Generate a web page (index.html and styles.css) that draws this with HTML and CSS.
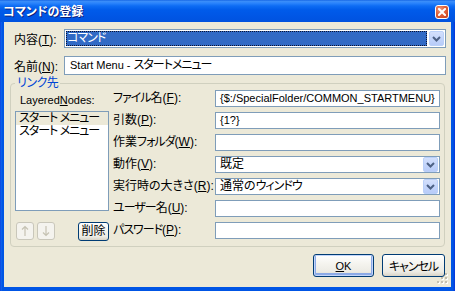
FILE: index.html
```html
<!DOCTYPE html>
<html lang="ja">
<head>
<meta charset="utf-8">
<title>コマンドの登録</title>
<link rel="stylesheet" href="styles.css">
</head>
<body>
<div class="window">
  <div class="titlebar">
    <span class="title">コマンドの登録</span>
    <span class="close"><svg width="8" height="8" viewBox="0 0 8 8"><path d="M1 1L7 7M7 1L1 7" stroke="#fff" stroke-width="2" stroke-linecap="square"/></svg></span>
  </div>
  <div class="body">
    <div class="row">
      <span class="lbl">内容(<u>T</u>):</span>
      <div class="combo combo-main">
        <div class="combo-val focus kana">コマンド</div>
        <span class="drop"><svg width="9" height="6" viewBox="0 0 9 6"><path d="M1 1L4.5 4.5L8 1" fill="none" stroke="#4D6185" stroke-width="2"/></svg></span>
      </div>
    </div>
    <div class="row row2">
      <span class="lbl">名前(<u>N</u>):</span>
      <div class="field field-main"><span class="lat">Start Menu - </span><span class="kana">スタートメニュー</span></div>
    </div>
    <fieldset class="group">
      <legend>リンク先</legend>
      <div class="grid">
        <div class="left">
          <div class="nodes-lbl lat">Layered<u>N</u>odes:</div>
          <div class="listbox">
            <div class="item selected kana">スタート メニュー</div>
            <div class="item kana">スタート メニュー</div>
          </div>
          <div class="lb-buttons">
            <span class="sbtn disabled"><svg width="16" height="16" viewBox="0 0 16 16"><path d="M8 3.5V13M5 6.5L8 3.5L11 6.5" fill="none" stroke="#C5C2B2" stroke-width="1.2"/></svg></span>
            <span class="sbtn disabled"><svg width="16" height="16" viewBox="0 0 16 16"><path d="M8 3V12.5M5 9.5L8 12.5L11 9.5" fill="none" stroke="#C5C2B2" stroke-width="1.2"/></svg></span>
            <span class="xbtn del">削除</span>
          </div>
        </div>
        <span class="flbl"><span class="kana">ファイル</span>名(<u>F</u>):</span>
        <div class="field lat">{$:/SpecialFolder/COMMON_STARTMENU}</div>
        <span class="flbl">引数(<u>P</u>):</span>
        <div class="field lat">{1?}</div>
        <span class="flbl">作業<span class="kana">フォルダ</span>(<u>W</u>):</span>
        <div class="field"></div>
        <span class="flbl">動作(<u>V</u>):</span>
        <div class="combo">
          <div class="combo-val">既定</div>
          <span class="drop"><svg width="9" height="6" viewBox="0 0 9 6"><path d="M1 1L4.5 4.5L8 1" fill="none" stroke="#4D6185" stroke-width="2"/></svg></span>
        </div>
        <span class="flbl">実行時の大きさ(<u>R</u>):</span>
        <div class="combo">
          <div class="combo-val">通常の<span class="kana">ウィンドウ</span></div>
          <span class="drop"><svg width="9" height="6" viewBox="0 0 9 6"><path d="M1 1L4.5 4.5L8 1" fill="none" stroke="#4D6185" stroke-width="2"/></svg></span>
        </div>
        <span class="flbl"><span class="kana">ユーザー</span>名(<u>U</u>):</span>
        <div class="field"></div>
        <span class="flbl"><span class="kana">パスワード</span>(<u>P</u>):</span>
        <div class="field"></div>
      </div>
    </fieldset>
    <div class="footer">
      <span class="xbtn ok default lat"><u>O</u>K</span>
      <span class="xbtn cancel kana">キャンセル</span>
    </div>
    <svg class="grip" width="12" height="12" viewBox="0 0 12 12">
      <g fill="#fff"><rect x="9" y="1" width="2" height="2"/><rect x="5" y="5" width="2" height="2"/><rect x="9" y="5" width="2" height="2"/><rect x="1" y="9" width="2" height="2"/><rect x="5" y="9" width="2" height="2"/><rect x="9" y="9" width="2" height="2"/></g>
      <g fill="#C2BFB0"><rect x="8" y="0" width="2" height="2"/><rect x="4" y="4" width="2" height="2"/><rect x="8" y="4" width="2" height="2"/><rect x="0" y="8" width="2" height="2"/><rect x="4" y="8" width="2" height="2"/><rect x="8" y="8" width="2" height="2"/></g>
    </svg>
  </div>
</div>
</body>
</html>
```

FILE: styles.css
```css
html, body {
  margin: 0;
  padding: 0;
}

body {
  width: 455px;
  height: 291px;
  overflow: hidden;
  font-family: "Liberation Sans", "Noto Sans CJK JP", sans-serif;
  font-size: 12px;
  font-feature-settings: "palt";
  color: #000;
  background: #0055E5;
}

u {
  text-decoration: underline;
  text-underline-offset: 1px;
}

.lat {
  font-size: 11px;
  letter-spacing: 0;
}

.kana {
  letter-spacing: -1px;
}

.window {
  width: 455px;
  height: 291px;
  box-sizing: border-box;
  display: flex;
  flex-direction: column;
  background: linear-gradient(90deg, #0831D9 0, #166AEE 1px, #0055E5 2px, #0055E5 calc(100% - 2px), #0831D9 100%);
}

.titlebar {
  height: 22px;
  flex: none;
  display: flex;
  align-items: center;
  justify-content: space-between;
  padding: 0 6px 0 3px;
  background: linear-gradient(180deg, #0A5AE0 0, #3D8FF8 1px, #2C85FC 3px, #0D6CF4 6px, #005BEA 10px, #0056E5 16px, #0052DF 22px);
  color: #fff;
}

.title {
  font-family: "Noto Sans CJK JP", sans-serif;
  font-weight: bold;
  font-size: 12px;
  line-height: 14px;
  text-shadow: 1px 1px 0 #0A1E7A;
}

.close {
  width: 14px;
  height: 14px;
  box-sizing: border-box;
  border: 1px solid #fff;
  border-radius: 3px;
  background: radial-gradient(circle at 35% 30%, #F29A7C 0, #E0603A 45%, #C7411C 100%);
  display: flex;
  align-items: center;
  justify-content: center;
  margin-top: 1px;
}

.body {
  flex: 1;
  margin: 0 4px 4px 4px;
  background: #ECE9D8;
  padding: 7px 5px 0 6px;
  position: relative;
}

.row {
  display: flex;
  align-items: center;
  height: 19px;
  padding-left: 4px;
}

.row2 {
  margin-top: 8px;
}

.lbl {
  width: 50px;
  flex: none;
  white-space: nowrap;
}

.field {
  box-sizing: border-box;
  height: 17px;
  border: 1px solid #7F9DB9;
  background: #fff;
  padding: 0 4px;
  line-height: 15px;
  white-space: nowrap;
  overflow: hidden;
}

.field-main {
  flex: 1;
  height: 19px;
  line-height: 17px;
  padding-left: 5px;
}

.combo {
  box-sizing: border-box;
  height: 17px;
  border: 1px solid #7F9DB9;
  background: #fff;
  display: flex;
  align-items: center;
  padding: 0 1px 0 0;
  gap: 2px;
}

.combo-main {
  flex: 1;
  height: 19px;
  padding: 1px;
}

.combo-val {
  flex: 1;
  padding-left: 4px;
  line-height: 15px;
  white-space: nowrap;
  overflow: hidden;
}

.combo-val.focus {
  box-sizing: border-box;
  height: 15px;
  line-height: 13px;
  padding-left: 0;
  background: #316AC5;
  color: #fff;
  border: 1px dotted #0A1230;
}

.drop {
  width: 15px;
  height: 15px;
  flex: none;
  box-sizing: border-box;
  border: 1px solid #BAD0F9;
  border-radius: 2px;
  background: linear-gradient(180deg, #D4E0FC 0, #C4D5FB 50%, #B8CCF8 100%);
  display: flex;
  align-items: center;
  justify-content: center;
}

.group {
  margin: 2px 1px 0 0;
  padding: 0 4px 7px 4px;
  border: 1px solid #D0D0BF;
  border-radius: 4px;
  min-width: 0;
}

.group legend {
  padding: 0 2px;
  margin-left: 0;
  color: #0046D5;
  line-height: 13px;
  font-size: 12px;
  letter-spacing: -0.5px;
}

.grid {
  display: grid;
  grid-template-columns: 98px 102px 1fr;
  grid-template-rows: repeat(7, 17px);
  row-gap: 5px;
  align-items: center;
}

.left {
  grid-column: 1;
  grid-row: 1 / 8;
  align-self: stretch;
  display: flex;
  flex-direction: column;
  width: 94px;
}

.nodes-lbl {
  height: 21px;
  line-height: 16px;
  padding-left: 5px;
  box-sizing: border-box;
  padding-top: 2px;
}

.listbox {
  box-sizing: border-box;
  height: 100px;
  border: 1px solid #7F9DB9;
  background: #fff;
}

.item {
  height: 12px;
  line-height: 12px;
  padding-left: 3px;
  white-space: nowrap;
  overflow: hidden;
}

.item.selected {
  background: #ECE9D8;
  height: 13px;
  line-height: 13px;
}

.lb-buttons {
  margin-top: auto;
  margin-bottom: -1px;
  display: flex;
  align-items: center;
  padding-left: 1px;
  gap: 3px;
  height: 18px;
}

.sbtn {
  width: 18px;
  height: 18px;
  box-sizing: border-box;
  border: 1px solid #C9C7BA;
  border-radius: 3px;
  background: #F4F3EE;
  display: flex;
  align-items: center;
  justify-content: center;
}

.flbl {
  grid-column: 2;
  white-space: nowrap;
  line-height: 15px;
}

.xbtn {
  box-sizing: border-box;
  border: 1px solid #003C74;
  border-radius: 3px;
  background: linear-gradient(180deg, #FFFFFF 0, #F5F4EF 40%, #ECEBE4 80%, #D8D3C6 100%);
  display: flex;
  align-items: center;
  justify-content: center;
  white-space: nowrap;
}

.del {
  margin-left: auto;
  width: 31px;
  height: 19px;
  line-height: 15px;
}

.footer {
  display: flex;
  justify-content: flex-end;
  gap: 8px;
  margin: 7px 1px 0 0;
}

.ok, .cancel {
  height: 23px;
}

.ok {
  width: 61px;
}

.cancel {
  width: 63px;
}

.default {
  box-shadow: inset 0 0 0 1px #C2D5FA, inset 0 -1px 0 2px #8CAAE6;
}

.grip {
  position: absolute;
  right: 2px;
  bottom: 2px;
}
```
